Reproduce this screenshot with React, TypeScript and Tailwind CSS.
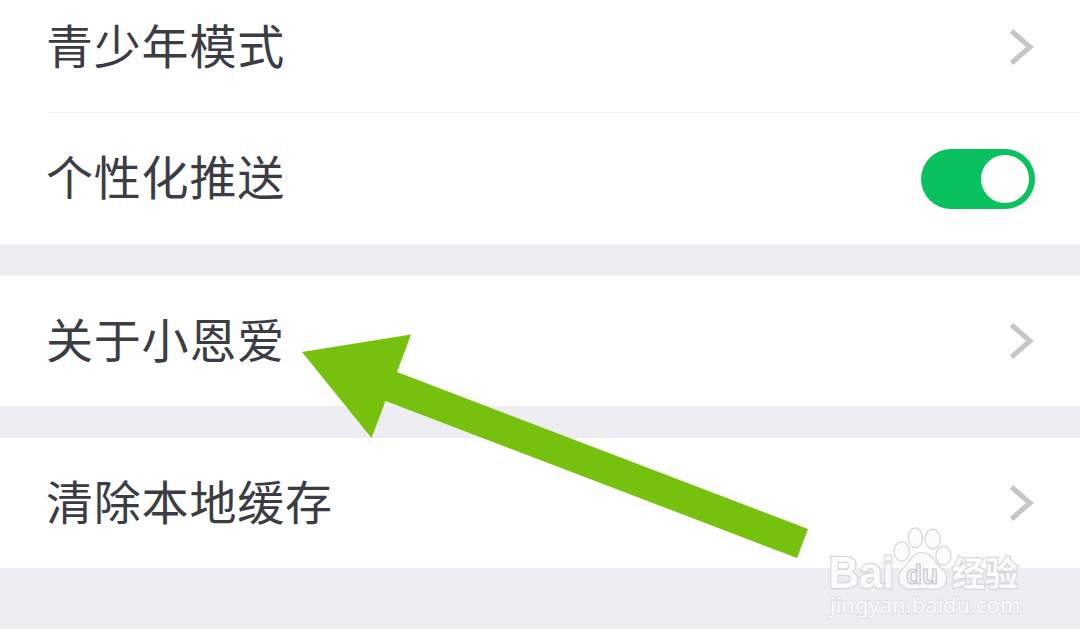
import type { ReactNode } from "react";

interface SettingRowProps {
    label: string;
    className: string;
    children: ReactNode;
}

function SettingRow({ label, className, children }: SettingRowProps) {
    return (
        <div className={`flex shrink-0 items-center justify-between bg-white pl-[46px] ${className}`}>
            <span className="pb-2 text-[47px] leading-none tracking-[0.8px] whitespace-nowrap text-[#3b3c44]">{label}</span>
            {children}
        </div>
    );
}

function Chevron() {
    return (
        <svg className="mr-[46px] h-9 w-6" viewBox="0 0 24 36" fill="none">
            <path d="M1.5 2 20 18 1.5 34" stroke="#c6c6c6" strokeWidth="5" />
        </svg>
    );
}

function Toggle() {
    return (
        <button
            role="switch"
            aria-checked="true"
            className="mr-[45px] flex h-[60px] w-[114px] items-center justify-end rounded-full bg-[#0ac160] pr-1.5"
        >
            <span className="h-12 w-12 rounded-full bg-white" />
        </button>
    );
}

function Arrow() {
    return (
        <svg className="pointer-events-none absolute top-0 left-0" width="1080" height="643" viewBox="0 0 1080 643">
            <path d="M302 352 411 334.500 397 372 808 529 797 558 385.500 401 371.500 438Z" fill="#76c10d" />
        </svg>
    );
}

function Watermark() {
    return (
        <svg
            className="pointer-events-none absolute top-[520px] left-[820px]"
            width="220"
            height="105"
            viewBox="0 0 220 105"
            fill="#fbfbfc"
            stroke="#d6d6d9"
            strokeWidth="1.2"
        >
            <g paintOrder="stroke" strokeWidth="2.4">
                <text x="8.500" y="67.500" fontSize="44" fontWeight="700" textLength="65.500" lengthAdjust="spacingAndGlyphs" fontFamily='"Liberation Sans", sans-serif'>Bai</text>
                <text x="132" y="65.500" fontSize="34.500" fontWeight="700" textLength="66" lengthAdjust="spacingAndGlyphs" fontFamily='"Noto Sans CJK SC", sans-serif'>经验</text>
            </g>
            {/* Paw */}
            <g fillOpacity="0.85">
                <ellipse cx="81.700" cy="31.500" rx="7.700" ry="9.800" />
                <ellipse cx="95.400" cy="17.800" rx="7.200" ry="9.900" />
                <ellipse cx="112.700" cy="18.900" rx="7.700" ry="9.700" />
                <ellipse cx="123.400" cy="35.700" rx="7.700" ry="9.500" />
            </g>
            <path d="M102 32.500C94 32.500 91 39 87.500 43.500C83.500 49 78 51.500 78.500 59C79 66.500 85.500 70 92 69.300C99 68.300 106 68.300 113 69.300C120 70 126.500 66 126.700 59C127 51.500 121 48.500 117 43.500C113 38.500 109.500 32.500 102 32.500Z" />
            <text x="86" y="63.500" fontSize="28" fontWeight="700" fill="#f1f1f4" stroke="#c8c8cc" textLength="32" lengthAdjust="spacingAndGlyphs" strokeWidth="1.2" fontFamily='"Liberation Sans", sans-serif'>du</text>
            <text x="10" y="93" fontSize="22.500" textLength="190.500" lengthAdjust="spacingAndGlyphs" paintOrder="stroke" strokeWidth="1.6" stroke="#dcdce0" fontFamily='"Noto Sans", sans-serif'>jingyan.baidu.com</text>
        </svg>
    );
}

export default function App() {
    return (
        <div className="relative flex h-[643px] w-[1080px] flex-col overflow-hidden bg-white font-['Noto_Sans_CJK_SC',sans-serif] antialiased">
            <SettingRow label="青少年模式" className="h-[112px] pb-[18px]">
                <Chevron />
            </SettingRow>
            <div className="ml-12 h-px shrink-0 bg-[#f3f3f4]" />
            <SettingRow label="个性化推送" className="h-[131px]">
                <Toggle />
            </SettingRow>

            <div className="h-8 shrink-0 bg-[#eeeef2]" />
            <SettingRow label="关于小恩爱" className="h-[130px]">
                <Chevron />
            </SettingRow>

            <div className="h-8 shrink-0 bg-[#eeeef2]" />
            <SettingRow label="清除本地缓存" className="h-[130px]">
                <Chevron />
            </SettingRow>
            <div className="h-[61px] shrink-0 bg-[#eeeef2]" />

            <Arrow />
            <Watermark />
        </div>
    );
}
